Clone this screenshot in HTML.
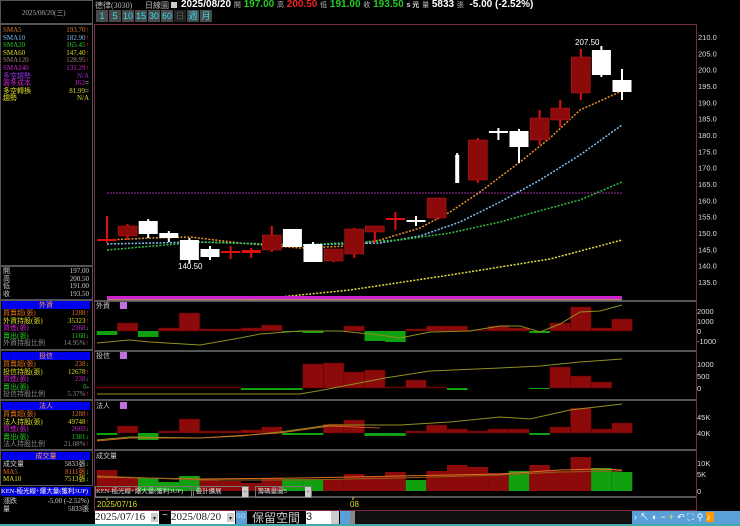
<!DOCTYPE html>
<html><head><meta charset="utf-8">
<style>
body{margin:0;background:#000;width:740px;height:526px;overflow:hidden;position:relative;font-family:"Liberation Sans","Noto Sans CJK TC",sans-serif;}
.a{position:absolute;white-space:nowrap;}
.lp{position:absolute;left:0;width:92px;font-size:7px;line-height:7.6px;font-family:"Liberation Serif","Noto Sans CJK TC",serif;}
.row{display:flex;justify-content:space-between;padding:0 3px 0 3px;height:7.6px;}
.hd{background:#0000ee;color:#ff9b3a;text-align:center;height:8px;line-height:8px;margin:1px 2px;}
.box{position:absolute;left:0;width:91px;border:1px solid #555;}
.btn{display:inline-block;width:12px;height:12px;background:#4a4a4a;color:#2ee0ee;font-size:9px;text-align:center;line-height:12px;margin-right:1px;font-family:"Liberation Sans",sans-serif;}
</style></head><body>
<div class="box" style="top:0;height:22px;"></div>
<div class="a" style="left:22px;top:8px;font-size:7px;color:#aaa;font-family:'Liberation Serif','Noto Sans CJK TC',serif">2025/08/20(三)</div>
<div class="box" style="top:24px;height:240px;"></div>
<div class="lp" style="top:27px">
<div class="row"><span style="color:#d07a30">SMA5</span><span style="color:#d07a30">193.70<b style="color:#f22">↑</b></span></div>
<div class="row"><span style="color:#7ab8e8">SMA10</span><span style="color:#7ab8e8">182.90<b style="color:#f22">↑</b></span></div>
<div class="row"><span style="color:#2c2">SMA20</span><span style="color:#2c2">165.45<b style="color:#f22">↑</b></span></div>
<div class="row"><span style="color:#dd2">SMA60</span><span style="color:#dd2">147.40<b style="color:#f22">↑</b></span></div>
<div class="row"><span style="color:#a08070">SMA120</span><span style="color:#a08070">128.95<b style="color:#f22">↑</b></span></div>
<div class="row"><span style="color:#c2c">SMA240</span><span style="color:#c2c">131.29<b style="color:#f22">↑</b></span></div>
<div class="row"><span style="color:#9030e0">多空趨勢</span><span style="color:#9030e0">N/A</span></div>
<div class="row"><span style="color:#c2c">籌多成本</span><span style="color:#c2c">162<b style="color:#ccc">=</b></span></div>
<div class="row"><span style="color:#dd2">多空轉換</span><span style="color:#dd2">81.99<b style="color:#ccc">=</b></span></div>
<div class="row"><span style="color:#dd2">趨勢</span><span style="color:#dd2">N/A</span></div>
</div>
<div class="box" style="top:266px;height:32px;"></div>
<div class="lp" style="top:268px;color:#ccc">
<div class="row"><span>開</span><span>197.00</span></div>
<div class="row"><span>高</span><span>200.50</span></div>
<div class="row"><span>低</span><span>191.00</span></div>
<div class="row"><span>收</span><span>193.50</span></div>
</div>
<div class="box" style="top:300px;height:48px;"></div>
<div class="lp" style="top:300px">
<div class="hd">外資</div>
<div class="row"><span style="color:#e07020">買賣超(張)</span><span style="color:#e07020">1288<b style="color:#f22">↑</b></span></div>
<div class="row"><span style="color:#dd2">外資持股(張)</span><span style="color:#dd2">35323<b style="color:#f22">↑</b></span></div>
<div class="row"><span style="color:#c2c">買進(張)</span><span style="color:#c2c">2368<b style="color:#2c2">↓</b></span></div>
<div class="row"><span style="color:#2c2">賣出(張)</span><span style="color:#2c2">1160<b style="color:#2c2">↓</b></span></div>
<div class="row"><span style="color:#888">外資持股比例</span><span style="color:#888">14.95%<b style="color:#f22">↑</b></span></div>
</div>
<div class="box" style="top:350px;height:48px;"></div>
<div class="lp" style="top:351px">
<div class="hd">投信</div>
<div class="row"><span style="color:#e07020">買賣超(張)</span><span style="color:#e07020">238<b style="color:#2c2">↓</b></span></div>
<div class="row"><span style="color:#dd2">投信持股(張)</span><span style="color:#dd2">12678<b style="color:#f22">↑</b></span></div>
<div class="row"><span style="color:#c2c">買進(張)</span><span style="color:#c2c">238<b style="color:#2c2">↓</b></span></div>
<div class="row"><span style="color:#2c2">賣出(張)</span><span style="color:#2c2">0<b style="color:#ccc">-</b></span></div>
<div class="row"><span style="color:#888">投信持股比例</span><span style="color:#888">5.37%<b style="color:#f22">↑</b></span></div>
</div>
<div class="box" style="top:400px;height:48px;"></div>
<div class="lp" style="top:401px">
<div class="hd">法人</div>
<div class="row"><span style="color:#e07020">買賣超(張)</span><span style="color:#e07020">1288<b style="color:#f22">↑</b></span></div>
<div class="row"><span style="color:#dd2">法人持股(張)</span><span style="color:#dd2">49748<b style="color:#f22">↑</b></span></div>
<div class="row"><span style="color:#c2c">買進(張)</span><span style="color:#c2c">2669<b style="color:#2c2">↓</b></span></div>
<div class="row"><span style="color:#2c2">賣出(張)</span><span style="color:#2c2">1381<b style="color:#2c2">↓</b></span></div>
<div class="row"><span style="color:#888">法人持股比例</span><span style="color:#888">21.08%<b style="color:#f22">↑</b></span></div>
</div>
<div class="box" style="top:450px;height:34px;"></div>
<div class="lp" style="top:451px">
<div class="hd">成交量</div>
<div class="row"><span style="color:#ccc">成交量</span><span style="color:#ccc">5833張<b style="color:#2c2">↓</b></span></div>
<div class="row"><span style="color:#e07020">MA5</span><span style="color:#e07020">8111張<b style="color:#2c2">↓</b></span></div>
<div class="row"><span style="color:#dd2">MA10</span><span style="color:#dd2">7513張<b style="color:#2c2">↓</b></span></div>
</div>
<div class="a" style="left:1px;top:487px;width:90px;height:9px;background:#0000dd;color:#fff;font-size:6.5px;line-height:9px;font-family:'Liberation Serif','Noto Sans CJK TC',serif">KEN-極光線+爆大量(獲利3UP)</div>
<div class="lp" style="top:498px;color:#ccc">
<div class="row"><span>漲跌</span><span>-5.00 (-2.52%)</span></div>
<div class="row"><span>量</span><span>5833張</span></div>
</div>

<div class="a" style="left:95px;top:0px;font-size:8px;color:#bbb;font-family:'Liberation Serif','Noto Sans CJK TC',serif">德律(3030)</div>
<div class="a" style="left:145px;top:0px;font-size:8px;color:#bbb;font-family:'Liberation Serif','Noto Sans CJK TC',serif">日線圖 <span style="display:inline-block;width:6px;height:6px;background:#ccc"></span></div>
<div class="a" style="left:181px;top:-1px;font-size:10px;font-weight:bold;color:#fff">2025/08/20 <span style="font-size:7px;color:#bbb;font-weight:normal">開</span> <span style="color:#2c2">197.00</span> <span style="font-size:7px;color:#bbb;font-weight:normal">高</span> <span style="color:#e22">200.50</span> <span style="font-size:7px;color:#bbb;font-weight:normal">低</span> <span style="color:#2c2">191.00</span> <span style="font-size:7px;color:#bbb;font-weight:normal">收</span> <span style="color:#2c2">193.50</span> <span style="font-size:7px;color:#ddd">s 元</span> <span style="font-size:7px;color:#bbb;font-weight:normal">量</span> 5833 <span style="font-size:7px;color:#bbb;font-weight:normal">張</span> &nbsp;-5.00 (-2.52%)</div>
<div class="a" style="left:96px;top:10px;font-size:0">
<span class="btn">1</span><span class="btn">5</span><span class="btn">10</span><span class="btn">15</span><span class="btn">30</span><span class="btn">60</span><span class="btn" style="background:#222;color:#555">日</span><span class="btn">週</span><span class="btn">月</span></div>

<svg class="a" style="left:0;top:0" width="740" height="526" id="sv"></svg>

<div class="a" style="left:95px;top:486px;width:95px;height:10px;border:1px solid #777;color:#ddd;font-size:6.5px;line-height:10px;font-family:'Liberation Serif','Noto Sans CJK TC',serif">KEN-極光線+爆大量(獲利3UP)</div>
<div class="a" style="left:193px;top:486px;width:54px;height:10px;border:1px solid #777;color:#ddd;font-size:6.5px;line-height:10px;font-family:'Liberation Serif','Noto Sans CJK TC',serif">&nbsp;疊計擴展<span style="float:right;background:#ccc;color:#000;width:6px;text-align:center">-</span></div>
<div class="a" style="left:255px;top:486px;width:55px;height:10px;border:1px solid #777;color:#ddd;font-size:6.5px;line-height:10px;font-family:'Liberation Serif','Noto Sans CJK TC',serif">&nbsp;籌碼量圖5<span style="float:right;background:#ccc;color:#000;width:6px;text-align:center">-</span></div>
<div class="a" style="left:97px;top:500px;font-size:8px;color:#dd2">2025/07/16</div>
<div class="a" style="left:350px;top:500px;font-size:8px;color:#dd2">08</div>
<div class="a" style="left:95px;top:511px;width:64px;height:13px;background:#fff;color:#222;font-size:11px;line-height:13px;font-family:'Liberation Serif',serif">2025/07/16<span style="position:absolute;right:1px;top:2px;width:7px;height:9px;background:#ccc;font-size:6px;text-align:center">▾</span></div>
<div class="a" style="left:162px;top:510px;color:#ddd;font-size:10px">~</div>
<div class="a" style="left:171px;top:511px;width:64px;height:13px;background:#fff;color:#222;font-size:11px;line-height:13px;font-family:'Liberation Serif',serif">2025/08/20<span style="position:absolute;right:1px;top:2px;width:7px;height:9px;background:#ccc;font-size:6px;text-align:center">▾</span></div>
<div class="a" style="left:236px;top:511px;width:11px;height:13px;background:#5aa0d8;color:#cde;font-size:6px;line-height:13px">GO</div>
<div class="a" style="left:252px;top:509px;color:#ccc;font-size:12px;font-family:'Liberation Sans','Noto Sans CJK TC',sans-serif">保留空間</div>
<div class="a" style="left:306px;top:511px;width:25px;height:13px;background:#fff;color:#222;font-size:11px;line-height:13px">3</div>
<div class="a" style="left:331px;top:511px;width:8px;height:13px;background:#ccc"></div>
<div class="a" style="left:340px;top:511px;width:10px;height:13px;background:#5aa0d8"></div>
<div class="a" style="left:350px;top:511px;width:5px;height:13px;background:#888"></div>
<div class="a" style="left:355px;top:511px;width:277px;height:13px;background:#111"></div>
<div class="a" style="left:632px;top:511px;width:108px;height:13px;background:#5aa0d8;overflow:hidden"></div>
<div class="a" style="left:634px;top:511px;width:104px;height:13px;color:#fff;font-size:9px;line-height:13px;letter-spacing:3px;overflow:hidden">›↖◐−<span style="color:#ee4">+</span>↶⛶⚲<span style="background:#f90;color:#fff">♪</span></div>
<div class="a" style="left:0;top:524px;width:740px;height:2px;background:#4aa"></div>

<script>
var s='';
function R(x,y,w,h,c,ex){s+='<rect x="'+x+'" y="'+y+'" width="'+w+'" height="'+h+'" fill="'+c+'" '+(ex||'')+'/>';}
function L(x1,y1,x2,y2,c,w,ex){s+='<line x1="'+x1+'" y1="'+y1+'" x2="'+x2+'" y2="'+y2+'" stroke="'+c+'" stroke-width="'+(w||1)+'" '+(ex||'')+'/>';}
function P(pts,c,w,ex){s+='<polyline fill="none" points="'+pts.map(p=>p.join(',')).join(' ')+'" stroke="'+c+'" stroke-width="'+(w||1)+'" '+(ex||'')+'/>';}
function T(x,y,t,c,fs,ex){s+='<text x="'+x+'" y="'+y+'" fill="'+c+'" font-size="'+(fs||8)+'" font-family="Liberation Sans,sans-serif" '+(ex||'')+'>'+t+'</text>';}
R(94.5,24.5,602,486,'none','stroke="#7a2a40"');
[300,350,399,449,496].forEach(y=>R(95,y,601,2,'#555'));
R(94,24,1,486,'#7a2a40');
var labs=[210,205,200,195,190,185,180,175,170,165,160,155,150,145,140,135];
labs.forEach(p=>{var y=37+(210-p)*3.267;T(698,y+3,p.toFixed(1),'#ddd',7.5);});
[['2000',314],['1000',324],['0',334],['-1000',344],['1000',367],['500',379],['0',391],['45K',420],['40K',436],['10K',466],['5K',477],['0',494]].forEach(a=>T(697,a[1],a[0],'#ddd',7.5));
var cx=i=>107+20.6*i;
L(107,193,622,193,'#802080',1.2,'stroke-dasharray="2,1"');
P([[107,240],[150,238],[190,237],[240,243],[300,248],[350,246],[380,240],[420,228],[450,212],[480,192],[520,162],[550,138],[580,110],[622,91]],'#e89030',1.5,'stroke-dasharray="2,1.5"');
P([[107,244],[200,242],[300,245],[380,243],[420,236],[460,222],[500,202],[540,180],[580,155],[622,125]],'#80c0f0',1.5,'stroke-dasharray="2,1.5"');
P([[107,250],[200,242],[300,245],[400,240],[450,233],[500,222],[550,208],[580,200],[622,182]],'#30c040',1.5,'stroke-dasharray="2,1.5"');
P([[250,300],[350,290],[450,275],[550,259],[622,240]],'#e0e040',1.5,'stroke-dasharray="2,1.5"');
R(107,296,515,3,'#d020d0');R(107,299,515,1.5,'#b08070');
var W='#fff',D='#8c0a0a',RR='#e01010';
var c=[[0,239,241,216,243,RR],[1,226,236,224,240,D],[2,221,234,219,238,W],[3,233,238,231,242,W],[4,240,260,238,263,W],[5,249,257,246,260,W],[6,251,253,246,259,RR],[7,250,253,248,258,RR],[8,235,250,226,252,D],[9,229,247,229,247,W],[10,244,262,242,262,W],[11,249,261,249,262,D],[12,229,254,228,258,D],[13,226,232,226,243,D],[14,218,220,212,230,RR],[15,220,222,216,226,W],[16,198,218,198,220,D],[17,155,183,153,183,W,4],[18,140,180,138,183,D],[19,131,133,128,140,W],[20,131,147,129,163,W],[21,118,140,110,145,D],[22,108,120,100,127,D],[23,57,93,49,100,D],[24,50,75,46,77,W],[25,80,92,69,100,W]];
c.forEach(k=>{var x=cx(k[0]);var w=k[6]||19;var wc=k[5]==W?W:RR;R(x-1,k[3],2,k[4]-k[3],wc);R(x-w/2,k[1],w,Math.max(2,k[2]-k[1]),k[5]);if(k[5]==D)R(x-w/2,k[1],w,Math.max(2,k[2]-k[1]),'none','stroke="#b01818" stroke-width="0.6"');});
T(575,45,'207.50','#fff',8);T(178,269,'140.50','#fff',8);
var G='#10a010';
function bars(zero,arr,greens){arr.forEach((v,i)=>{if(v==null)return;var x=cx(i)-10.3;var isG=greens?greens.indexOf(i)>=0:v>zero;if(greens){R(x,v,20.6,zero-v,isG?G:D);return;}if(v<zero)R(x,v,20.6,zero-v,D,'stroke="#500" stroke-width="0.5"');else R(x,zero,20.6,Math.max(1,v-zero),G);});}
bars(331,[335,323,337,328,313,329,329,328,325,332,333,null,326,341,342,329,326,326,330,326,328,333,323,307,328,319]);
P([[97,343],[130,340],[150,342],[200,345],[240,338],[260,334],[300,331],[340,331],[380,335],[400,338],[430,332],[470,331],[500,326],[520,326],[540,332],[560,324],[580,312],[600,311],[622,305]],'#909020',1);
bars(388,[387,387,387,387,387,387,387,390,390,390,364,363,372,370,387,380,387,390,null,null,null,388,367,376,382,null]);
P([[97,394],[240,394],[300,394],[323,390],[385,378],[430,371],[500,368],[540,366],[580,362],[622,359]],'#909020',1);
bars(433,[435,426,440,431,419,431,431,430,427,435,435,424,420,436,436,431,425,429,431,429,429,435,427,408,429,423]);
P([[97,440],[130,437],[200,438],[240,436],[280,432],[330,425],[400,425],[450,422],[500,417],[530,419],[570,410],[622,404]],'#909020',1);
P([[97,441],[130,438],[200,438],[280,433],[330,426],[380,428]],'#e07020',0.8);
bars(491,[470,478,478,482,476,480,481,483,478,479,479,479,474,477,472,480,471,465,467,473,471,465,471,457,468,472],[2,3,4,9,10,15,20,24,25]);
P([[97,477],[200,479],[300,478],[400,476],[500,474],[560,470],[600,469],[622,470]],'#e07020',1);
P([[97,476],[200,480],[300,480],[400,478],[500,475],[560,472],[622,471]],'#906020',1);
T(96,308,'外資','#ccc',7,'font-family="Noto Sans CJK TC"');R(120,302,7,7,'#c070e0');
T(96,358,'投信','#ccc',7,'font-family="Noto Sans CJK TC"');R(120,352,7,7,'#c070e0');
T(96,408,'法人','#ccc',7,'font-family="Noto Sans CJK TC"');R(120,402,7,7,'#c070e0');
T(96,458,'成交量','#ccc',7,'font-family="Noto Sans CJK TC"');
L(107,497,107,500,'#dd2');L(353,497,353,500,'#dd2');
document.getElementById('sv').innerHTML=s;
</script>
</body></html>
